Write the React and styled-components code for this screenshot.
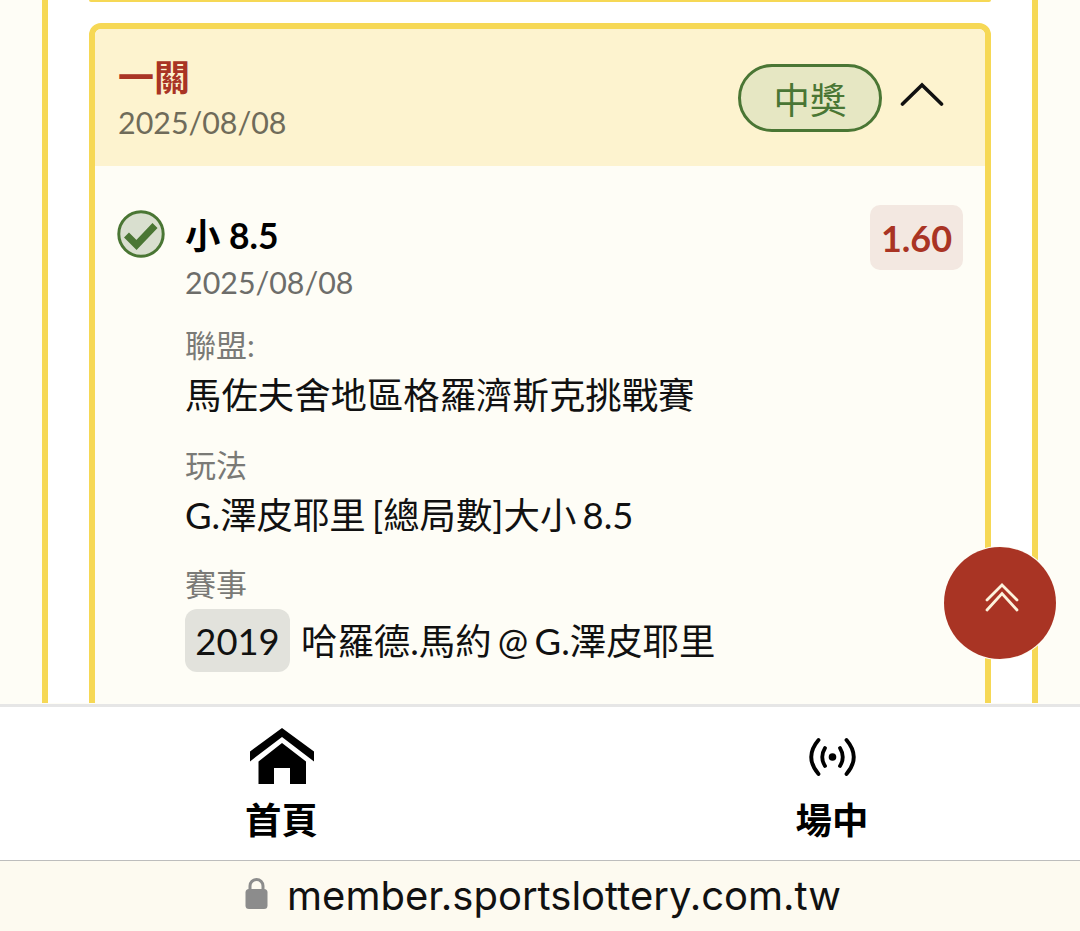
import React from 'react'
import styled, { createGlobalStyle } from 'styled-components'

const GlobalStyle = createGlobalStyle`
  html, body {
    margin: 0;
    padding: 0;
    background: #fefdf6;
  }
  * {
    box-sizing: border-box;
  }
`;

const fontStack = `Lato, "Noto Sans CJK TC", sans-serif`;

const Page = styled.div`
  position: relative;
  width: 1080px;
  height: 931px;
  overflow: hidden;
  display: flex;
  flex-direction: column;
  font-family: ${fontStack};
  background: #fefdf6;
`;

const Scroll = styled.main`
  height: 703px;
  flex: none;
  overflow: hidden;
  padding: 0 42px;
`;

const Panel = styled.div`
  height: 100%;
  overflow: hidden;
  background: #fff;
  border-left: 6px solid #f6d855;
  border-right: 6px solid #f6d855;
  padding: 0 41px;
`;

const PrevCard = styled.div`
  height: 2px;
  margin-bottom: 21px;
  background: #f6d855;
  border-radius: 0 0 6px 6px;
`;

const Card = styled.section`
  border: 6px solid #f6d855;
  border-radius: 12px;
  overflow: hidden;
  background: #fefdf6;
`;

const CardHead = styled.header`
  height: 137px;
  background: #fdf3cf;
  display: flex;
  align-items: center;
  justify-content: space-between;
  padding: 0 41px 0 23px;
`;

const HeadText = styled.div`
  display: flex;
  flex-direction: column;
  margin-top: 4px;
`;

const Title = styled.div`
  font-size: 36px;
  line-height: 44px;
  font-weight: 700;
  color: #a93424;
`;

const HeadDate = styled.div`
  font-size: 30.4px;
  line-height: 44px;
  margin-top: 1px;
  color: #6f6b5a;
`;

const HeadRight = styled.div`
  display: flex;
  align-items: center;
  gap: 18px;
`;

const StatusPill = styled.div`
  width: 144px;
  height: 68px;
  border: 3px solid #4a7634;
  border-radius: 34px;
  background: #e6e7c3;
  color: #4a7634;
  font-size: 36.4px;
  display: flex;
  align-items: center;
  justify-content: center;
`;

const CardBody = styled.div`
  padding: 39px 22px 70px;
  display: grid;
  grid-template-columns: 68px 1fr;
`;

const StatusIcon = styled.div`
  height: 48px;
  margin-top: 5px;
`;

const Bet = styled.div`
  display: flex;
  flex-direction: column;
`;

const BetHead = styled.div`
  display: flex;
  justify-content: space-between;
  align-items: flex-start;
`;

const BetName = styled.div`
  font-size: 35.4px;
  line-height: 44px;
  font-weight: 700;
  color: #000;
  margin-top: 9px;
`;

const Odds = styled.div`
  width: 93px;
  height: 65px;
  background: #f3e8e1;
  border-radius: 10px;
  color: #a93424;
  font-size: 36px;
  font-weight: 700;
  display: flex;
  align-items: center;
  justify-content: center;
`;

const BetDate = styled.div`
  font-size: 30.4px;
  line-height: 44px;
  color: #6d6d6a;
  margin-top: -10px;
`;

const Field = styled.div`
  margin-top: ${p => p.$gap}px;
`;

const Label = styled.div`
  font-size: 31px;
  line-height: 44px;
  color: #7a7a76;
`;

const Value = styled.div`
  font-size: 36.4px;
  line-height: 50px;
  word-spacing: -3px;
  color: #111;
  margin-top: 3px;
  display: flex;
  align-items: center;
  gap: 11px;
  white-space: nowrap;
`;

const MatchNo = styled.span`
  width: 105px;
  height: 63px;
  background: #e2e2dc;
  border-radius: 12px;
  display: inline-flex;
  align-items: center;
  justify-content: center;
`;

const TopButton = styled.button`
  position: absolute;
  left: 944px;
  top: 547px;
  width: 112px;
  height: 112px;
  border-radius: 50%;
  border: 0;
  padding: 0;
  background: #a93424;
  box-shadow: 0 0 0 1px #fefdf6;
  display: flex;
  align-items: center;
  justify-content: center;
`;

const TabBar = styled.nav`
  height: 157px;
  flex: none;
  background: #fff;
  border-top: 3px solid #e6e6e6;
  border-bottom: 1px solid #bdbdbd;
  display: grid;
  grid-template-columns: 563px 538px;
  margin-top: 1px;
`;

const Tab = styled.div`
  display: flex;
  flex-direction: column;
  align-items: center;
  color: #000;
  padding-top: ${p => p.$top}px;
`;

const TabIcon = styled.div`
  height: ${p => p.$h}px;
  display: flex;
  align-items: center;
  justify-content: center;
`;

const TabLabel = styled.div`
  font-size: 36.4px;
  line-height: 44px;
  font-weight: 700;
  margin-top: ${p => p.$gap}px;
`;

const UrlBar = styled.footer`
  flex: 1;
  background: #fdfaf0;
  display: flex;
  align-items: center;
  justify-content: center;
  gap: 19px;
  padding: 0 0 6px 6px;
`;

const UrlText = styled.span`
  font-family: Inter, "Noto Sans", sans-serif;
  font-size: 40px;
  margin-top: 5px;
  color: #111;
`;

const Chevron = styled.svg`
  margin-bottom: 8px;
`;

const DoubleChevron = styled.svg`
  margin: 0 0 10px 3px;
`;

const CheckIcon = () => (
  <svg width="48" height="48" viewBox="0 0 48 48">
    <circle cx="24" cy="24" r="22.2" fill="#d9dfcf" stroke="#4a7634" strokeWidth="3" />
    <path d="M9.500 25 L19.500 35 L38 15.500" fill="none" stroke="#4a7634" strokeWidth="7" />
  </svg>
);

const ChevronUp = () => (
  <Chevron width="44" height="26" viewBox="0 0 44 26">
    <path d="M2.500 23 L22 4 L41.500 23" fill="none" stroke="#111" strokeWidth="3.600" strokeLinecap="round" />
  </Chevron>
);

const DoubleUp = () => (
  <DoubleChevron width="36" height="30" viewBox="0 0 36 30">
    <path d="M3 17 L18 2 L33 17 M3 27 L18 10.500 L33 27" fill="none" stroke="#fdf3dc" strokeWidth="2.800" strokeLinecap="round" />
  </DoubleChevron>
);

const HomeIcon = () => (
  <svg width="64" height="56" viewBox="0 0 64 56">
    <path d="M32 0 L64 23.400 V33.400 L32 9 L0 33.400 V23.400 Z" fill="#000" />
    <path d="M32 15 L56 33.400 V56 H40 V40 H24 V56 H8.500 V33.400 Z" fill="#000" />
  </svg>
);

const LiveIcon = () => (
  <svg width="50" height="40" viewBox="0 0 50 40">
    <circle cx="25.500" cy="20" r="3.800" fill="#000" />
    <path d="M18 11 Q12.500 20 18 29 M33 11 Q38.500 20 33 29" fill="none" stroke="#000" strokeWidth="3.800" strokeLinecap="round" />
    <path d="M11.500 3 Q-3 20 11.500 37 M39.500 3 Q54 20 39.500 37" fill="none" stroke="#000" strokeWidth="3.800" strokeLinecap="round" />
  </svg>
);

const LockIcon = () => (
  <svg width="23" height="32" viewBox="0 0 23 32">
    <path d="M5 14 V9 a6.500 6.500 0 0 1 13 0 V14" fill="none" stroke="#8c8c8c" strokeWidth="3" />
    <rect x="0.500" y="12" width="22" height="20" rx="3.500" fill="#8c8c8c" />
  </svg>
);

export default function App() {
  return (
    <Page>
      <GlobalStyle />
      <Scroll>
        <Panel>
          <PrevCard />
          <Card>
            <CardHead>
              <HeadText>
                <Title>一關</Title>
                <HeadDate>2025/08/08</HeadDate>
              </HeadText>
              <HeadRight>
                <StatusPill>中獎</StatusPill>
                <ChevronUp />
              </HeadRight>
            </CardHead>
            <CardBody>
              <StatusIcon><CheckIcon /></StatusIcon>
              <Bet>
                <BetHead>
                  <BetName>小 8.5</BetName>
                  <Odds>1.60</Odds>
                </BetHead>
                <BetDate>2025/08/08</BetDate>
                <Field $gap={19}>
                  <Label>聯盟:</Label>
                  <Value>馬佐夫舍地區格羅濟斯克挑戰賽</Value>
                </Field>
                <Field $gap={23}>
                  <Label>玩法</Label>
                  <Value>G.澤皮耶里 [總局數]大小 8.5</Value>
                </Field>
                <Field $gap={22}>
                  <Label>賽事</Label>
                  <Value>
                    <MatchNo>2019</MatchNo>
                    哈羅德.馬約 @ G.澤皮耶里
                  </Value>
                </Field>
              </Bet>
            </CardBody>
          </Card>
        </Panel>
      </Scroll>
      <TopButton aria-label="回到頂部"><DoubleUp /></TopButton>
      <TabBar>
        <Tab $top={21}>
          <TabIcon $h={56}><HomeIcon /></TabIcon>
          <TabLabel $gap={14}>首頁</TabLabel>
        </Tab>
        <Tab $top={30}>
          <TabIcon $h={40}><LiveIcon /></TabIcon>
          <TabLabel $gap={21}>場中</TabLabel>
        </Tab>
      </TabBar>
      <UrlBar>
        <LockIcon />
        <UrlText>member.sportslottery.com.tw</UrlText>
      </UrlBar>
    </Page>
  )
}
